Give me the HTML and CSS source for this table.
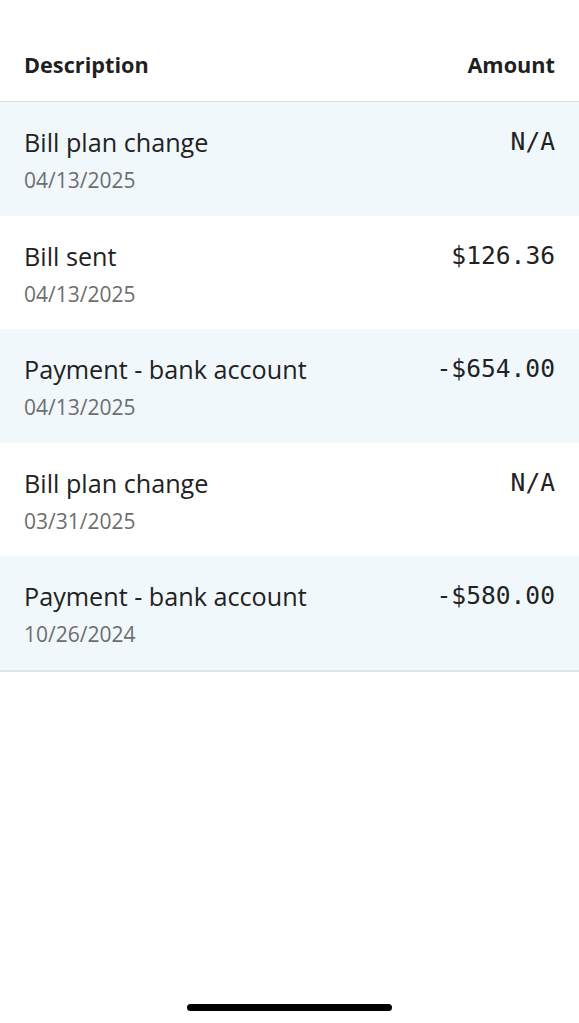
FILE: index.html
```html
<!DOCTYPE html>
<html lang="en">
<head>
<meta charset="utf-8">
<link rel="stylesheet" href="styles.css">
</head>
<body>
<div class="page">
  <div class="table">
    <div class="head">
      <span>Description</span>
      <span>Amount</span>
    </div>
    <div class="row alt">
      <div class="desc"><div class="title">Bill plan change</div><div class="date">04/13/2025</div></div>
      <div class="amt">N/A</div>
    </div>
    <div class="row">
      <div class="desc"><div class="title">Bill sent</div><div class="date">04/13/2025</div></div>
      <div class="amt">$126.36</div>
    </div>
    <div class="row alt">
      <div class="desc"><div class="title">Payment - bank account</div><div class="date">04/13/2025</div></div>
      <div class="amt">-$654.00</div>
    </div>
    <div class="row">
      <div class="desc"><div class="title">Bill plan change</div><div class="date">03/31/2025</div></div>
      <div class="amt">N/A</div>
    </div>
    <div class="row alt last">
      <div class="desc"><div class="title">Payment - bank account</div><div class="date">10/26/2024</div></div>
      <div class="amt">-$580.00</div>
    </div>
  </div>
  <div class="home-bar"></div>
</div>
</body>
</html>
```
FILE: styles.css
```css
html, body { margin: 0; padding: 0; background: #fff; }
body { font-family: "Open Sans", "Noto Sans", sans-serif; color: #222; }
.page { width: 579px; height: 1023px; display: flex; flex-direction: column; justify-content: space-between; }
.table { display: flex; flex-direction: column; }
.head {
  height: 102px; box-sizing: border-box; padding: 50px 24px 0;
  display: flex; justify-content: space-between; align-items: flex-start;
  font-weight: 700; font-size: 21.7px; line-height: 30px; color: #1f1f1f;
  border-bottom: 1px solid #d6e2e8;
}
.row {
  height: 113.5px; box-sizing: border-box; padding: 22px 24px 0;
  display: flex; justify-content: space-between; align-items: flex-start;
}
.row.alt { background: #f0f8fb; }
.row.last { height: 115.5px; border-bottom: 2px solid #dbe5ea; }
.title { font-size: 25.2px; line-height: 36px; color: #222; font-weight: 400; }
.date { font-size: 21px; line-height: 30px; margin-top: 5px; color: #6e6e6e; }
.amt { font-family: "DejaVu Sans Mono", "Liberation Mono", monospace; font-size: 24.6px; line-height: 36px; color: #222; }
.home-bar { align-self: center; width: 205px; height: 7px; border-radius: 4px; background: #000; margin-bottom: 12px; }
```
